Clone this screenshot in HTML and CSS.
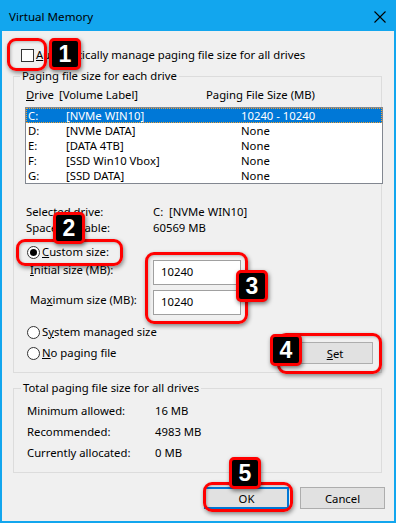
FILE: index.html
```html
<!DOCTYPE html>
<html lang="en">
<head>
  <meta charset="UTF-8">
  <title>Virtual Memory</title>
  <link rel="stylesheet" href="styles.css">
</head>
<body>
  <div class="window">
    <div class="titlebar">
      <span class="title">Virtual Memory</span>
      <svg class="close" width="12" height="12" viewBox="0 0 12 12">
        <path d="M0.5 0.5 L11.5 11.5 M11.5 0.5 L0.5 11.5" stroke="#000" stroke-width="1.1" fill="none"/>
      </svg>
    </div>

    <div class="body">
      <div class="check-row">
        <span class="checkbox"></span>
        <span><u>A</u>utomatically manage paging file size for all drives</span>
      </div>

      <fieldset class="group group-drives">
        <legend>Paging file size for each drive</legend>
        <div class="list-head">
          <span class="head-drive"><u>D</u>rive</span>
          <span class="head-label">[Volume Label]</span>
          <span class="head-size">Paging File Size (MB)</span>
        </div>
        <div class="drive-list">
          <div class="drive-row selected"><span class="c1">C:</span><span class="c2">[NVMe WIN10]</span><span>10240 - 10240</span></div>
          <div class="drive-row"><span class="c1">D:</span><span class="c2">[NVMe DATA]</span><span>None</span></div>
          <div class="drive-row"><span class="c1">E:</span><span class="c2">[DATA 4TB]</span><span>None</span></div>
          <div class="drive-row"><span class="c1">F:</span><span class="c2">[SSD Win10 Vbox]</span><span>None</span></div>
          <div class="drive-row"><span class="c1">G:</span><span class="c2">[SSD DATA]</span><span>None</span></div>
        </div>

        <div class="info-row first"><span class="info-label">Selected drive:</span><span>C:&nbsp; [NVMe WIN10]</span></div>
        <div class="info-row"><span class="info-label">Space available:</span><span>60569 MB</span></div>

        <div class="radio-row custom"><span class="radio checked"></span><span><u>C</u>ustom size:</span></div>
        <div class="size-row"><span class="size-label"><u>I</u>nitial size (MB):</span><span class="edit">10240</span></div>
        <div class="size-row second"><span class="size-label">Ma<u>x</u>imum size (MB):</span><span class="edit">10240</span></div>

        <div class="radio-row system"><span class="radio"></span><span>S<u>y</u>stem managed size</span></div>
        <div class="set-row">
          <div class="radio-row"><span class="radio"></span><span><u>N</u>o paging file</span></div>
          <button class="btn btn-set"><u>S</u>et</button>
        </div>
      </fieldset>

      <fieldset class="group group-total">
        <legend>Total paging file size for all drives</legend>
        <div class="total-row"><span class="total-label">Minimum allowed:</span><span>16 MB</span></div>
        <div class="total-row"><span class="total-label">Recommended:</span><span>4983 MB</span></div>
        <div class="total-row"><span class="total-label">Currently allocated:</span><span>0 MB</span></div>
      </fieldset>

      <div class="actions">
        <button class="btn btn-ok">OK</button>
        <button class="btn btn-cancel">Cancel</button>
      </div>
    </div>

    <!-- annotation overlays -->
    <div class="ring ring-1"></div>
    <div class="ring ring-2"></div>
    <div class="ring ring-3"></div>
    <div class="ring ring-4"></div>
    <div class="ring ring-5"></div>
    <div class="badge badge-1">1</div>
    <div class="badge badge-2">2</div>
    <div class="badge badge-3">3</div>
    <div class="badge badge-4">4</div>
    <div class="badge badge-5">5</div>
  </div>
</body>
</html>
```

FILE: styles.css
```css
* {
  margin: 0;
  padding: 0;
  box-sizing: border-box;
}

body {
  font-family: 'Noto Sans', sans-serif;
  font-size: 11.3px;
  color: #000;
  background: #f0f0f0;
}

u {
  text-decoration: underline;
  text-underline-offset: 1px;
}

.window {
  position: relative;
  width: 396px;
  height: 523px;
  border: 2px solid #12a6ee;
  background: #f0f0f0;
}

.titlebar {
  height: 29px;
  background: #12a6ee;
  display: flex;
  align-items: center;
  justify-content: space-between;
  padding: 0 8px 0 7px;
}

.title {
  font-size: 11.6px;
  line-height: 16px;
}

.close {
  display: block;
}

.body {
  padding: 16px 12px 0 11px;
}

.check-row {
  height: 16px;
  display: flex;
  align-items: center;
  padding-left: 8px;
  line-height: 16px;
}

.checkbox {
  width: 13px;
  height: 13px;
  border: 1px solid #333;
  background: #fff;
  margin-right: 2px;
}

.group {
  border: 1px solid #dcdcdc;
  padding: 0 0 8px 12px;
}

.group legend {
  height: 16px;
  line-height: 16px;
  padding: 0 2px;
  margin-left: -6px;
}

.group-drives {
  margin-top: 5px;
}

.list-head {
  display: flex;
  height: 16px;
  line-height: 16px;
  margin-top: 3px;
}

.head-drive {
  width: 33px;
}

.head-label {
  width: 147px;
}

.drive-list {
  margin: 4px -2px 0 -1px;
  height: 77px;
  background: #fff;
  border: 1px solid #828790;
}

.drive-row {
  display: flex;
  height: 15px;
  line-height: 15px;
  padding-left: 2px;
}

.drive-row .c1 {
  width: 38px;
}

.drive-row .c2 {
  width: 175px;
}

.drive-row.selected {
  background: #0078d7;
  color: #fff;
  outline: 1px dotted #f0a030;
  outline-offset: -1px;
}

.info-row {
  display: flex;
  height: 16px;
  line-height: 16px;
}

.info-row.first {
  margin-top: 20px;
}

.info-label {
  width: 127px;
}

.radio-row {
  display: flex;
  align-items: center;
  height: 16px;
  line-height: 16px;
  padding-left: 1px;
}

.radio {
  width: 13px;
  height: 13px;
  border: 1px solid #333;
  border-radius: 50%;
  background: #fff;
  margin-right: 2px;
  display: flex;
  align-items: center;
  justify-content: center;
}

.radio.checked::after {
  content: "";
  width: 7px;
  height: 7px;
  border-radius: 50%;
  background: #000;
}

.radio-row.custom {
  margin-top: 8px;
}

.size-row {
  display: flex;
  align-items: flex-start;
  height: 25px;
}

.size-row.second {
  margin-top: 5px;
}

.size-label {
  width: 127px;
  padding: 2px 0 0 4px;
  line-height: 16px;
}

.edit {
  width: 88px;
  height: 25px;
  background: #fff;
  border: 1px solid #a0a0a0;
  padding: 3px 0 0 7px;
  line-height: 16px;
}

.radio-row.system {
  margin-top: 9px;
}

.set-row {
  display: flex;
  align-items: center;
  justify-content: space-between;
  height: 22px;
  margin-top: 2px;
  padding-right: 8px;
}

.btn {
  font-family: inherit;
  font-size: 11.3px;
  color: #000;
  background: #e1e1e1;
  border: 1px solid #adadad;
  height: 22px;
}

.btn-set {
  width: 76px;
}

.group-total {
  margin-top: 7px;
  padding-left: 13px;
  padding-bottom: 9px;
}

.total-row {
  display: flex;
  height: 21px;
  line-height: 21px;
}

.total-row:first-of-type {
  margin-top: 4px;
}

.total-label {
  width: 128px;
}

.actions {
  display: flex;
  justify-content: flex-end;
  gap: 11px;
  margin: 14px -3px 0 0;
}

.btn-ok,
.btn-cancel {
  width: 85px;
}

.btn-ok {
  border: 1px solid #0078d7;
  box-shadow: inset 0 0 0 1px #0078d7;
}

/* annotation overlays */
.ring {
  position: absolute;
  border: 3px solid #f00;
  border-radius: 9px;
  box-shadow: 1px 2px 4px rgba(0, 0, 0, 0.45), inset 1px 1px 3px rgba(0, 0, 0, 0.25);
}

.ring-1 { left: 5px; top: 36px; width: 40px; height: 33px; }
.ring-2 { left: 14px; top: 237px; width: 107px; height: 27px; }
.ring-3 { left: 143px; top: 250px; width: 103px; height: 72px; }
.ring-4 { left: 275px; top: 331px; width: 105px; height: 41px; }
.ring-5 { left: 201px; top: 480px; width: 90px; height: 30px; }

.badge {
  position: absolute;
  width: 32px;
  height: 32px;
  background: #000;
  border: 3px solid #f00;
  border-radius: 5px;
  color: #fff;
  font-family: 'Liberation Sans', Arial, sans-serif;
  font-weight: bold;
  font-size: 23px;
  line-height: 26px;
  text-align: center;
  box-shadow: 1px 2px 4px rgba(0, 0, 0, 0.5);
}

.badge-1 { left: 47px; top: 36px; }
.badge-2 { left: 51px; top: 210px; }
.badge-3 { left: 234px; top: 268px; }
.badge-4 { left: 268px; top: 332px; }
.badge-5 { left: 227px; top: 455px; }
```
